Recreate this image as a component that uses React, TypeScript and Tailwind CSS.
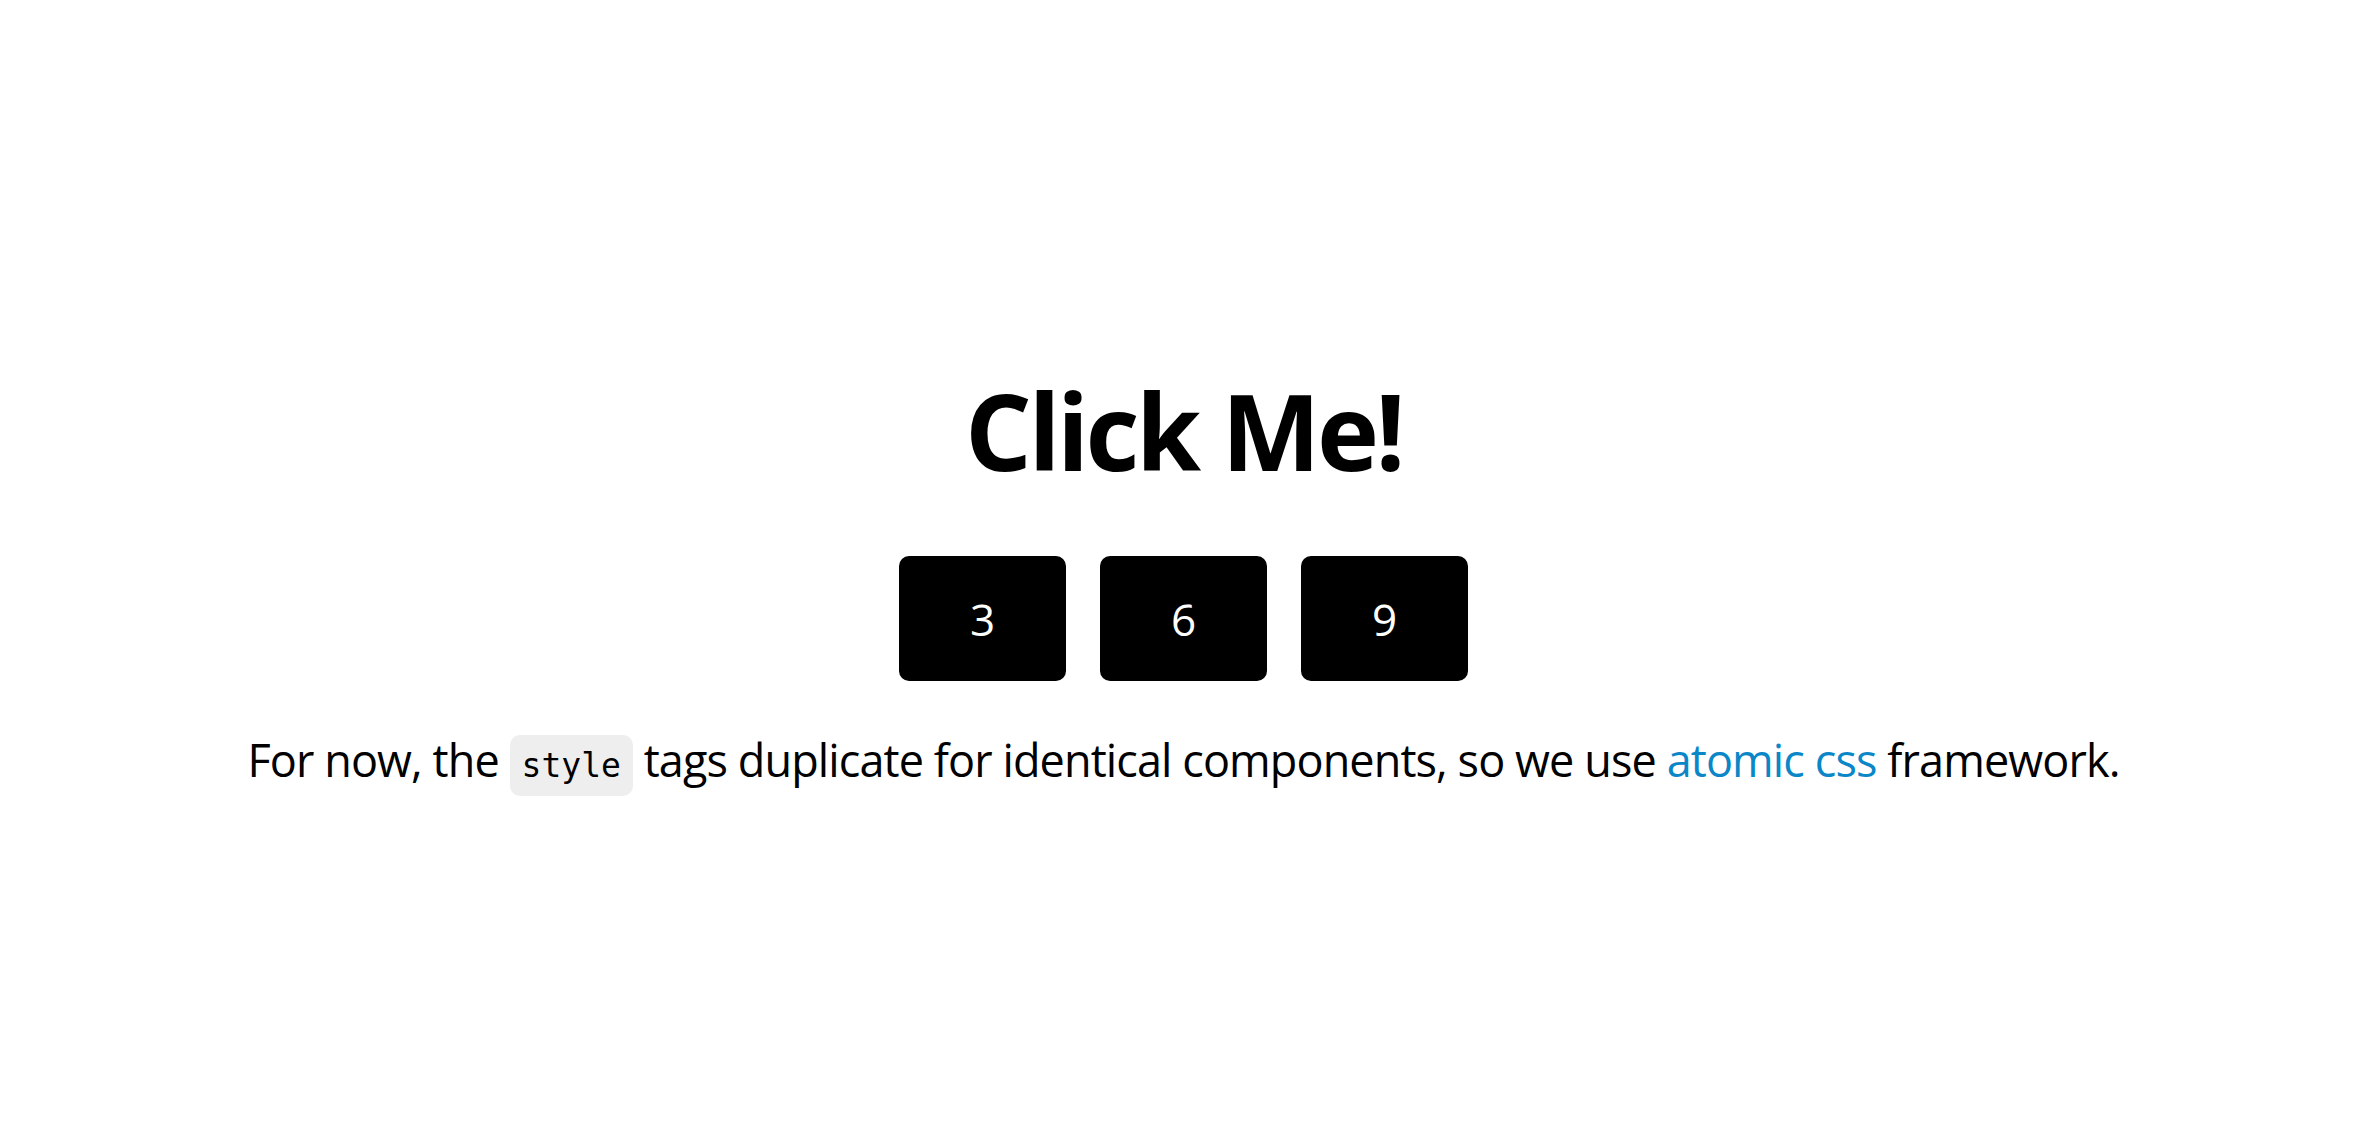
import React from "react";

export default function App() {
  const counts = [3, 6, 9];

  return (
    <main className="flex h-[1142px] w-full flex-col items-center justify-center bg-white pt-[22px] font-['Open_Sans',sans-serif] text-black">
      <h1 className="text-[105px] font-bold leading-[1.2] tracking-[-3.5px]">Click Me!</h1>

      {/* counter buttons */}
      <div className="mt-[62px] flex gap-[34px]">
        {counts.map((n) => (
          <button
            key={n}
            className="flex h-[125px] w-[167px] items-center justify-center rounded-[10px] bg-black text-[44px] text-white"
          >
            {n}
          </button>
        ))}
      </div>

      <p className="mt-[47px] text-[45px] leading-[1.4] tracking-[-0.9px]">
        For now, the{" "}
        <code className="inline-block rounded-[10px] bg-[#eeeeee] px-[12px] py-[10px] font-['DejaVu_Sans_Mono',monospace] text-[33px] leading-[41px] tracking-normal">
          style
        </code>{" "}
        tags duplicate for identical components, so we use{" "}
        <a href="#" className="text-[#0b87c8]">
          atomic css
        </a>{" "}
        framework.
      </p>
    </main>
  );
}
